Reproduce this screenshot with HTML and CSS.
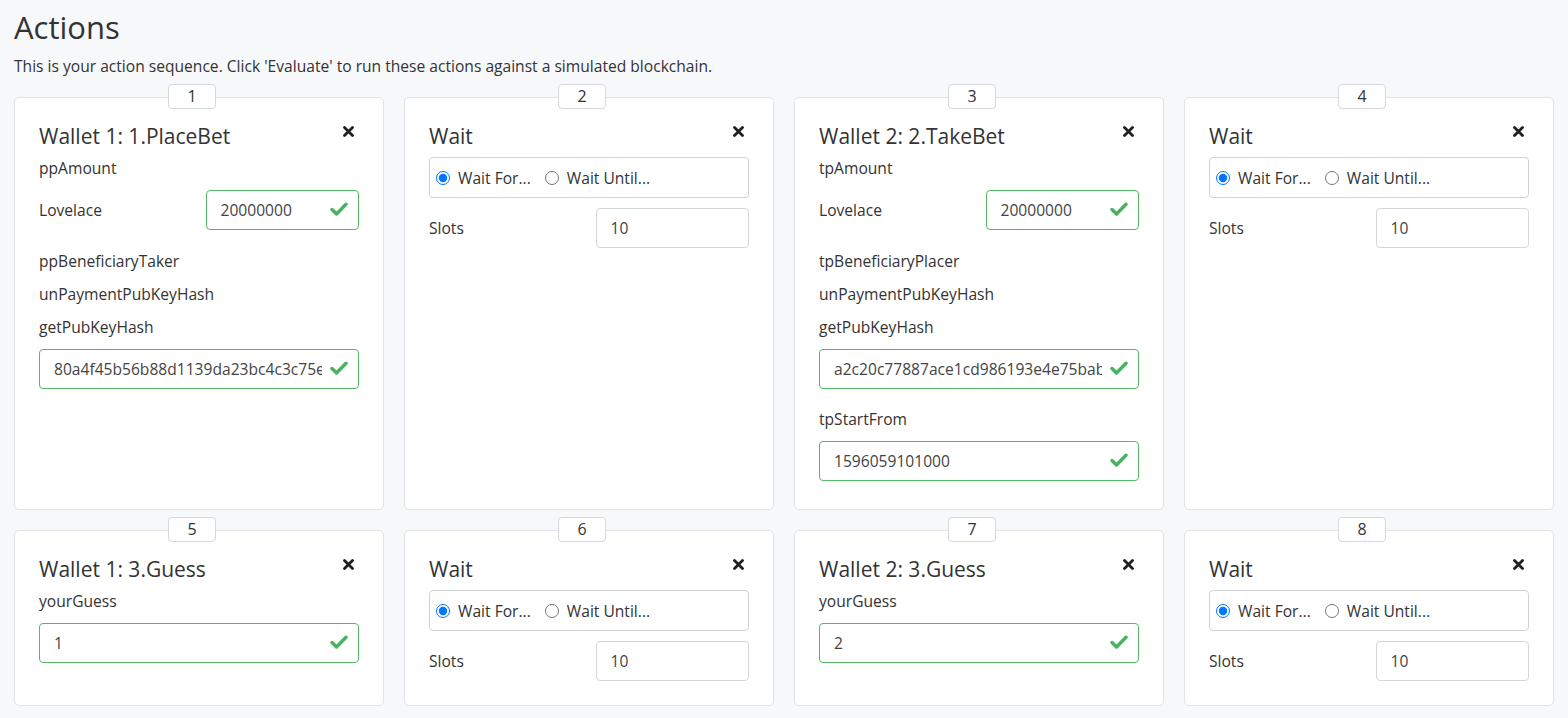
FILE: index.html
```html
<!DOCTYPE html>
<html lang="en">
<head>
<meta charset="utf-8">
<title>Actions</title>
<link rel="stylesheet" href="styles.css">
</head>
<body>
<main class="page">
  <h1 class="page-title">Actions</h1>
  <p class="page-intro">This is your action sequence. Click 'Evaluate' to run these actions against a simulated blockchain.</p>

  <div class="actions">
    <!-- 1 -->
    <section class="card">
      <span class="badge">1</span>
      <div class="card-head">
        <h3 class="card-title">Wallet 1: 1.PlaceBet</h3>
        <button class="close" type="button" aria-label="Remove"><svg viewBox="0 0 11 11" width="11" height="11"><path d="M1.5 1.5 L9.5 9.5 M9.5 1.5 L1.5 9.5" stroke="#1f1f1f" stroke-width="2.8" stroke-linecap="round"/></svg></button>
      </div>
      <div class="label">ppAmount</div>
      <div class="pair">
        <span class="pair-label">Lovelace</span>
        <div class="input-wrap valid"><input class="input" type="text" value="20000000"><svg class="check" viewBox="0 0 18 14" width="18" height="14"><path d="M2 7.5 L6.5 12 L16 2.3" fill="none" stroke="#47b35e" stroke-width="3.4" stroke-linecap="round" stroke-linejoin="round"/></svg></div>
      </div>
      <div class="label">ppBeneficiaryTaker</div>
      <div class="label">unPaymentPubKeyHash</div>
      <div class="label">getPubKeyHash</div>
      <div class="input-wrap valid field"><input class="input" type="text" value="80a4f45b56b88d1139da23bc4c3c75ec6d32943c087f250b86193ca7"><svg class="check" viewBox="0 0 18 14" width="18" height="14"><path d="M2 7.5 L6.5 12 L16 2.3" fill="none" stroke="#47b35e" stroke-width="3.4" stroke-linecap="round" stroke-linejoin="round"/></svg></div>
    </section>

    <!-- 2 -->
    <section class="card">
      <span class="badge">2</span>
      <div class="card-head">
        <h3 class="card-title">Wait</h3>
        <button class="close" type="button" aria-label="Remove"><svg viewBox="0 0 11 11" width="11" height="11"><path d="M1.5 1.5 L9.5 9.5 M9.5 1.5 L1.5 9.5" stroke="#1f1f1f" stroke-width="2.8" stroke-linecap="round"/></svg></button>
      </div>
      <div class="radio-group">
        <label class="radio"><input type="radio" name="w2" checked> Wait For...</label>
        <label class="radio"><input type="radio" name="w2"> Wait Until...</label>
      </div>
      <div class="pair slots">
        <span class="pair-label">Slots</span>
        <div class="input-wrap"><input class="input" type="text" value="10"></div>
      </div>
    </section>

    <!-- 3 -->
    <section class="card">
      <span class="badge">3</span>
      <div class="card-head">
        <h3 class="card-title">Wallet 2: 2.TakeBet</h3>
        <button class="close" type="button" aria-label="Remove"><svg viewBox="0 0 11 11" width="11" height="11"><path d="M1.5 1.5 L9.5 9.5 M9.5 1.5 L1.5 9.5" stroke="#1f1f1f" stroke-width="2.8" stroke-linecap="round"/></svg></button>
      </div>
      <div class="label">tpAmount</div>
      <div class="pair">
        <span class="pair-label">Lovelace</span>
        <div class="input-wrap valid"><input class="input" type="text" value="20000000"><svg class="check" viewBox="0 0 18 14" width="18" height="14"><path d="M2 7.5 L6.5 12 L16 2.3" fill="none" stroke="#47b35e" stroke-width="3.4" stroke-linecap="round" stroke-linejoin="round"/></svg></div>
      </div>
      <div class="label">tpBeneficiaryPlacer</div>
      <div class="label">unPaymentPubKeyHash</div>
      <div class="label">getPubKeyHash</div>
      <div class="input-wrap valid field"><input class="input" type="text" value="a2c20c77887ace1cd986193e4e75babd8993cfd56995cd5cfce609c2"><svg class="check" viewBox="0 0 18 14" width="18" height="14"><path d="M2 7.5 L6.5 12 L16 2.3" fill="none" stroke="#47b35e" stroke-width="3.4" stroke-linecap="round" stroke-linejoin="round"/></svg></div>
      <div class="label">tpStartFrom</div>
      <div class="input-wrap valid field"><input class="input" type="text" value="1596059101000"><svg class="check" viewBox="0 0 18 14" width="18" height="14"><path d="M2 7.5 L6.5 12 L16 2.3" fill="none" stroke="#47b35e" stroke-width="3.4" stroke-linecap="round" stroke-linejoin="round"/></svg></div>
    </section>

    <!-- 4 -->
    <section class="card">
      <span class="badge">4</span>
      <div class="card-head">
        <h3 class="card-title">Wait</h3>
        <button class="close" type="button" aria-label="Remove"><svg viewBox="0 0 11 11" width="11" height="11"><path d="M1.5 1.5 L9.5 9.5 M9.5 1.5 L1.5 9.5" stroke="#1f1f1f" stroke-width="2.8" stroke-linecap="round"/></svg></button>
      </div>
      <div class="radio-group">
        <label class="radio"><input type="radio" name="w4" checked> Wait For...</label>
        <label class="radio"><input type="radio" name="w4"> Wait Until...</label>
      </div>
      <div class="pair slots">
        <span class="pair-label">Slots</span>
        <div class="input-wrap"><input class="input" type="text" value="10"></div>
      </div>
    </section>

    <!-- 5 -->
    <section class="card">
      <span class="badge">5</span>
      <div class="card-head">
        <h3 class="card-title">Wallet 1: 3.Guess</h3>
        <button class="close" type="button" aria-label="Remove"><svg viewBox="0 0 11 11" width="11" height="11"><path d="M1.5 1.5 L9.5 9.5 M9.5 1.5 L1.5 9.5" stroke="#1f1f1f" stroke-width="2.8" stroke-linecap="round"/></svg></button>
      </div>
      <div class="label">yourGuess</div>
      <div class="input-wrap valid field"><input class="input" type="text" value="1"><svg class="check" viewBox="0 0 18 14" width="18" height="14"><path d="M2 7.5 L6.5 12 L16 2.3" fill="none" stroke="#47b35e" stroke-width="3.4" stroke-linecap="round" stroke-linejoin="round"/></svg></div>
    </section>

    <!-- 6 -->
    <section class="card">
      <span class="badge">6</span>
      <div class="card-head">
        <h3 class="card-title">Wait</h3>
        <button class="close" type="button" aria-label="Remove"><svg viewBox="0 0 11 11" width="11" height="11"><path d="M1.5 1.5 L9.5 9.5 M9.5 1.5 L1.5 9.5" stroke="#1f1f1f" stroke-width="2.8" stroke-linecap="round"/></svg></button>
      </div>
      <div class="radio-group">
        <label class="radio"><input type="radio" name="w6" checked> Wait For...</label>
        <label class="radio"><input type="radio" name="w6"> Wait Until...</label>
      </div>
      <div class="pair slots">
        <span class="pair-label">Slots</span>
        <div class="input-wrap"><input class="input" type="text" value="10"></div>
      </div>
    </section>

    <!-- 7 -->
    <section class="card">
      <span class="badge">7</span>
      <div class="card-head">
        <h3 class="card-title">Wallet 2: 3.Guess</h3>
        <button class="close" type="button" aria-label="Remove"><svg viewBox="0 0 11 11" width="11" height="11"><path d="M1.5 1.5 L9.5 9.5 M9.5 1.5 L1.5 9.5" stroke="#1f1f1f" stroke-width="2.8" stroke-linecap="round"/></svg></button>
      </div>
      <div class="label">yourGuess</div>
      <div class="input-wrap valid field"><input class="input" type="text" value="2"><svg class="check" viewBox="0 0 18 14" width="18" height="14"><path d="M2 7.5 L6.5 12 L16 2.3" fill="none" stroke="#47b35e" stroke-width="3.4" stroke-linecap="round" stroke-linejoin="round"/></svg></div>
    </section>

    <!-- 8 -->
    <section class="card">
      <span class="badge">8</span>
      <div class="card-head">
        <h3 class="card-title">Wait</h3>
        <button class="close" type="button" aria-label="Remove"><svg viewBox="0 0 11 11" width="11" height="11"><path d="M1.5 1.5 L9.5 9.5 M9.5 1.5 L1.5 9.5" stroke="#1f1f1f" stroke-width="2.8" stroke-linecap="round"/></svg></button>
      </div>
      <div class="radio-group">
        <label class="radio"><input type="radio" name="w8" checked> Wait For...</label>
        <label class="radio"><input type="radio" name="w8"> Wait Until...</label>
      </div>
      <div class="pair slots">
        <span class="pair-label">Slots</span>
        <div class="input-wrap"><input class="input" type="text" value="10"></div>
      </div>
    </section>
  </div>
</main>
</body>
</html>
```

FILE: styles.css
```css
* { box-sizing: border-box; }

html, body {
  margin: 0;
  padding: 0;
  background: #f7f8fa;
}

body {
  font-family: "Open Sans", "Liberation Sans", sans-serif;
  font-size: 15.6px;
  line-height: 24px;
  color: #333;
}

.page {
  padding: 8px 14px 0 14px;
  width: 1568px;
}

.page-title {
  margin: 0;
  font-size: 31px;
  font-weight: 400;
  line-height: 38px;
  color: #333;
}

.page-intro {
  margin: 8px 0 19px 0;
  line-height: 24px;
}

.actions {
  width: 1540px;
  display: grid;
  grid-template-columns: repeat(4, 1fr);
  column-gap: 20px;
  row-gap: 20px;
}

.card {
  position: relative;
  background: #fff;
  border: 1px solid #e0e3e7;
  border-radius: 5px;
  padding: 23px 24px 24px 24px;
  display: flex;
  flex-direction: column;
}

.badge {
  position: absolute;
  top: -14px;
  left: calc(50% - 31px);
  width: 48px;
  height: 25px;
  background: #fff;
  border: 1px solid #d4d7db;
  border-radius: 4px;
  text-align: center;
  font-size: 16px;
  line-height: 23px;
  color: #333;
}

.card-head {
  display: flex;
  justify-content: space-between;
  align-items: flex-start;
  margin-bottom: 6px;
}

.card-title {
  margin: 0;
  font-size: 21px;
  font-weight: 400;
  line-height: 30px;
  color: #333;
}

.close {
  width: 22px;
  height: 22px;
  margin-top: -1px;
  padding: 0;
  border: 0;
  background: transparent;
  display: flex;
  align-items: center;
  justify-content: center;
}

.label {
  line-height: 23px;
  margin-bottom: 10px;
}

.pair {
  display: grid;
  grid-template-columns: 1fr 1fr;
  column-gap: 13px;
  align-items: center;
  margin-bottom: 20px;
}

.pair.slots {
  margin-bottom: 0;
}

.pair-label {
  line-height: 24px;
}

.input-wrap {
  position: relative;
}

.input-wrap.field {
  margin-bottom: 19px;
}

.input-wrap.field:last-child {
  margin-bottom: 4px;
}

.input {
  display: block;
  width: 100%;
  height: 40px;
  margin: 0;
  padding: 0 13px 0 14px;
  font-family: "Open Sans", "Liberation Sans", sans-serif;
  font-size: 15.6px;
  color: #444;
  background: #fff;
  border: 1px solid #d3d7dc;
  border-radius: 4px;
  outline: none;
}

.valid .input {
  border-color: #55b866;
  padding-right: 36px;
}

.check {
  position: absolute;
  right: 11px;
  top: 12px;
}

.radio-group {
  height: 41px;
  border: 1px solid #cfd3d8;
  border-radius: 4px;
  display: flex;
  align-items: center;
  padding-left: 1px;
  margin-bottom: 10px;
}

.radio {
  display: flex;
  align-items: center;
  white-space: pre;
  line-height: 24px;
  margin-right: 9px;
}

.radio input {
  margin: 0 4px 0 5px;
  width: 14px;
  height: 14px;
}
```
